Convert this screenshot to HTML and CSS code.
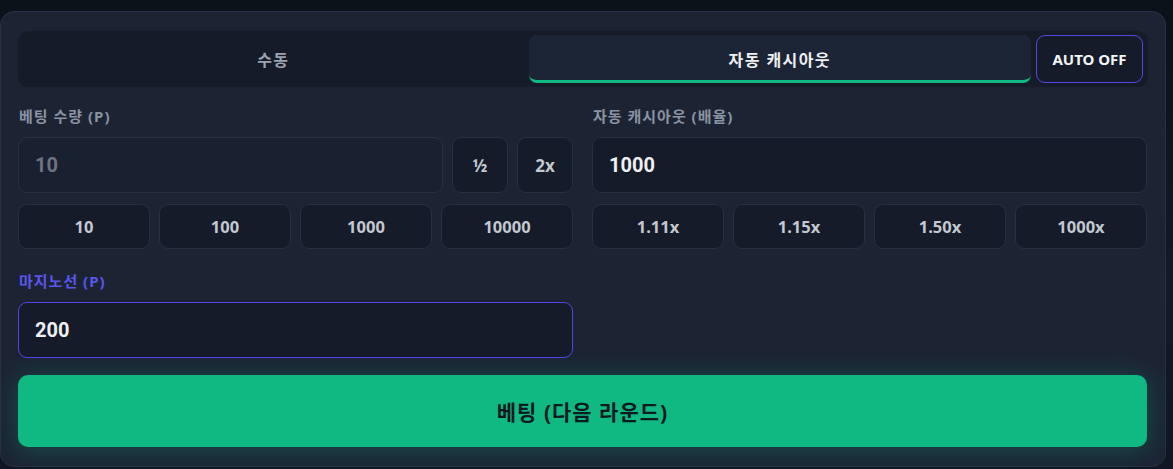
FILE: index.html
```html
<!DOCTYPE html>
<html lang="ko">
<head>
<meta charset="utf-8">
<link rel="stylesheet" href="styles.css">
</head>
<body>
<div class="card">
  <div class="tabs">
    <div class="tab">수동</div>
    <div class="tab active">자동 캐시아웃</div>
    <div class="auto">AUTO OFF</div>
  </div>
  <div class="grid">
    <div class="col">
      <div class="label">베팅 수량 (P)</div>
      <div class="row-input">
        <div class="input muted">10</div>
        <div class="sq">½</div>
        <div class="sq">2x</div>
      </div>
      <div class="quick">
        <div class="qbtn">10</div>
        <div class="qbtn">100</div>
        <div class="qbtn">1000</div>
        <div class="qbtn">10000</div>
      </div>
    </div>
    <div class="col">
      <div class="label">자동 캐시아웃 (배율)</div>
      <div class="row-input">
        <div class="input">1000</div>
      </div>
      <div class="quick">
        <div class="qbtn">1.11x</div>
        <div class="qbtn">1.15x</div>
        <div class="qbtn">1.50x</div>
        <div class="qbtn">1000x</div>
      </div>
    </div>
    <div class="col stop">
      <div class="label indigo">마지노선 (P)</div>
      <div class="input focus">200</div>
    </div>
  </div>
  <div class="bet">베팅 (다음 라운드)</div>
</div>
</body>
</html>
```
FILE: styles.css
```css
* { box-sizing: border-box; }
html, body { margin: 0; padding: 0; }
body {
  background: linear-gradient(180deg, #0b1119 0%, #111a26 60%, #0f1722 100%);
  height: 469px;
  font-family: "Noto Sans", "Noto Sans CJK KR", sans-serif;
  padding-top: 11px;
  overflow: hidden;
}
.card {
  width: 1166px;
  height: 456px;
  background: #1c2434;
  border: 1px solid #273143;
  border-radius: 14px;
  padding: 19px 18px 19px 17px;
}
.tabs {
  display: flex;
  gap: 4px;
  background: #151c28;
  border-radius: 10px;
  padding: 4px 5px 4px 4px;
  height: 56px;
  width: 1130px;
}
.tab {
  flex: 1;
  display: flex;
  align-items: center;
  justify-content: center;
  font-size: 16px;
  letter-spacing: 1.4px;
  font-weight: 700;
  color: #9aa2b1;
  border-radius: 8px;
}
.tab.active {
  background: #1c2535;
  color: #eef0f3;
  border-bottom: 3px solid #10b981;
  padding-top: 2px;
}
.auto {
  width: 107px;
  margin-left: 1px;
  display: flex;
  align-items: center;
  justify-content: center;
  font-size: 15px;
  font-weight: 700;
  color: #f3f4f6;
  border: 1px solid #5048e5;
  border-radius: 9px;
  background: #151b28;
}
.grid {
  display: grid;
  grid-template-columns: 555px 555px;
  column-gap: 19px;
  margin-top: 20px;
}
.label {
  font-size: 15px;
  letter-spacing: 1px;
  font-weight: 700;
  color: #8a93a2;
  line-height: 18px;
  height: 18px;
  margin-bottom: 12px;
  padding-left: 1px;
}
.label.indigo { color: #5b55ee; }
.row-input {
  display: flex;
  gap: 9px;
}
.input {
  flex: 1;
  height: 56px;
  background: #151b28;
  border: 1px solid #263042;
  border-radius: 9px;
  display: flex;
  align-items: center;
  padding-left: 16px;
  font-family: Roboto, "Noto Sans", sans-serif;
  font-size: 20px;
  font-weight: 700;
  color: #eef0f3;
}
.input.muted {
  background: #192130;
  color: #6c7482;
}
.input.focus {
  border-color: #5048e5;
}
.sq {
  width: 56px;
  height: 56px;
  background: #151b28;
  border: 1px solid #263042;
  border-radius: 9px;
  display: flex;
  align-items: center;
  justify-content: center;
  font-size: 17px;
  font-weight: 700;
  color: #c3c8d1;
}
.quick {
  display: grid;
  grid-template-columns: repeat(4, 1fr);
  gap: 9px;
  margin-top: 11px;
}
.qbtn {
  height: 45px;
  background: #151b28;
  border: 1px solid #263042;
  border-radius: 9px;
  display: flex;
  align-items: center;
  justify-content: center;
  font-size: 16.5px;
  font-weight: 700;
  color: #c3c8d1;
}
.stop { margin-top: 23px; }
.bet {
  margin-top: 17px;
  height: 72px;
  width: 1129px;
  background: #10b981;
  border-radius: 10px;
  box-shadow: 0 3px 24px rgba(16, 185, 129, 0.3);
  display: flex;
  align-items: center;
  justify-content: center;
  font-size: 21px;
  letter-spacing: 1px;
  font-weight: 700;
  color: #0e1a1f;
}
```
